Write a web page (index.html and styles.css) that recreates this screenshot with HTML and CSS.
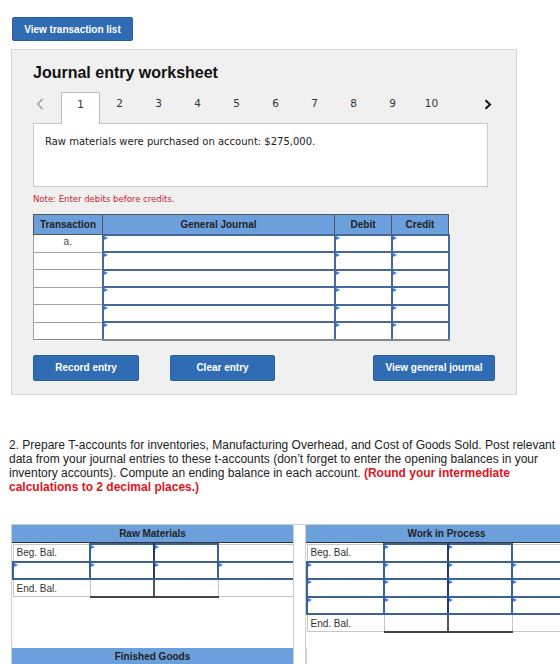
FILE: index.html
```html
<!DOCTYPE html>
<html lang="en">
<head>
<meta charset="UTF-8">
<meta name="viewport" content="width=device-width, initial-scale=1.0">
<title>Journal entry worksheet</title>
<link rel="stylesheet" href="styles.css">
</head>
<body>
<div class="page">
  <button class="btn btn-list">View transaction list</button>

  <section class="worksheet">
    <h2>Journal entry worksheet</h2>
    <div class="tabs">
      <span class="prev"><svg width="8" height="12" viewBox="0 0 8 12"><path d="M6.5 1 L1.8 6 L6.5 11" fill="none" stroke="#9b9b9b" stroke-width="1.5"/></svg></span>
      <span class="tab active">1</span>
      <span class="tab">2</span>
      <span class="tab">3</span>
      <span class="tab">4</span>
      <span class="tab">5</span>
      <span class="tab">6</span>
      <span class="tab">7</span>
      <span class="tab">8</span>
      <span class="tab">9</span>
      <span class="tab">10</span>
      <span class="next"><svg width="8" height="11" viewBox="0 0 8 11"><path d="M1.5 1.2 L6 5.5 L1.5 9.8" fill="none" stroke="#111" stroke-width="2"/></svg></span>
    </div>
    <div class="prompt">Raw materials were purchased on account: $275,000.</div>
    <p class="note">Note: Enter debits before credits.</p>

    <table class="journal">
      <thead>
        <tr>
          <th class="c-tr">Transaction</th>
          <th class="c-gj">General Journal</th>
          <th class="c-amt">Debit</th>
          <th class="c-amt">Credit</th>
        </tr>
      </thead>
      <tbody>
        <tr><td class="tr">a.</td><td class="in"></td><td class="in"></td><td class="in"></td></tr>
        <tr><td class="tr"></td><td class="in"></td><td class="in"></td><td class="in"></td></tr>
        <tr><td class="tr"></td><td class="in"></td><td class="in"></td><td class="in"></td></tr>
        <tr><td class="tr"></td><td class="in"></td><td class="in"></td><td class="in"></td></tr>
        <tr><td class="tr"></td><td class="in"></td><td class="in"></td><td class="in"></td></tr>
        <tr><td class="tr"></td><td class="in"></td><td class="in"></td><td class="in"></td></tr>
      </tbody>
    </table>

    <div class="actions">
      <button class="btn btn-record">Record entry</button>
      <button class="btn btn-clear">Clear entry</button>
      <button class="btn btn-journal">View general journal</button>
    </div>
  </section>

  <p class="question">2. Prepare T-accounts for inventories, Manufacturing Overhead, and Cost of Goods Sold. Post relevant data from your journal entries to these t-accounts (don’t forget to enter the opening balances in your inventory accounts). Compute an ending balance in each account. <b class="warn">(Round your intermediate calculations to 2 decimal places.)</b></p>

  <div class="taccounts">
    <div class="tacct">
      <div class="thead">Raw Materials</div>
      <div class="tbody">
        <table class="ledger">
          <tr><td class="label">Beg. Bal.</td><td class="in mid"></td><td class="in"></td><td></td></tr>
          <tr><td class="in"></td><td class="in mid"></td><td class="in"></td><td class="in"></td></tr>
          <tr><td class="label">End. Bal.</td><td class="total mid"></td><td class="total"></td><td></td></tr>
        </table>
      </div>
    </div>
    <div class="tgap"></div>
    <div class="tacct">
      <div class="thead">Work in Process</div>
      <div class="tbody">
        <table class="ledger">
          <tr><td class="label">Beg. Bal.</td><td class="in mid"></td><td class="in"></td><td></td></tr>
          <tr><td class="in"></td><td class="in mid"></td><td class="in"></td><td class="in"></td></tr>
          <tr><td class="in"></td><td class="in mid"></td><td class="in"></td><td class="in"></td></tr>
          <tr><td class="in"></td><td class="in mid"></td><td class="in"></td><td class="in"></td></tr>
          <tr><td class="label">End. Bal.</td><td class="total mid"></td><td class="total"></td><td></td></tr>
        </table>
      </div>
    </div>
    <div class="tacct">
      <div class="thead">Finished Goods</div>
      <div class="tbody"></div>
    </div>
    <div class="tgap"></div>
    <div class="tacct">
      <div class="thead">Manufacturing Overhead</div>
      <div class="tbody"></div>
    </div>
  </div>
</div>
</body>
</html>
```

FILE: styles.css
```css
* { box-sizing:border-box; }
html { overflow:hidden; }
body { margin:0; background:#fff; color:#222; font-family:"Liberation Sans", Arial, sans-serif; }
.page { padding:17px 0 40px 11px; }

/* buttons */
.btn { display:block; height:26px; padding:0; background:#306cb4; color:#fff; border:1px solid #2a609f; border-radius:2px; font:bold 10px "Liberation Sans", Arial, sans-serif; cursor:pointer; }
.btn-list { width:121px; height:24px; margin-left:1px; }

/* worksheet panel */
.worksheet { margin-top:8px; width:506px; height:346px; background:#f0f0f0; border:1px solid #d6d6d6; padding:0 21px; }
.worksheet h2 { margin:13px 0 0; font-size:16px; line-height:20px; color:#111; }

.tabs { display:flex; height:31px; margin-top:9px; font:10.5px "DejaVu Sans", Verdana, sans-serif; color:#333; }
.prev { width:28px; padding:6px 0 0 3px; }
.tab { width:39px; text-align:center; line-height:20px; padding-top:1px; }
.tab.active { position:relative; z-index:1; height:32px; background:#fff; border:1px solid #bdbdbd; border-bottom:none; }
.next { margin-left:33px; padding-top:7px; }

.prompt { width:455px; height:64px; background:#fff; border:1px solid #cacaca; padding:11px 0 0 11px; font:10px/14px "DejaVu Sans", Verdana, sans-serif; color:#222; }
.note { margin:6px 0 0; font:8.5px/12px "DejaVu Sans", Verdana, sans-serif; color:#c4262e; }

/* journal grid */
.journal { margin-top:9px; border-collapse:collapse; table-layout:fixed; width:415px; background:#fff; }
.journal th { height:20px; padding:0; background:#6ca0dd; border:1px solid #555; font:bold 10px "Liberation Sans", Arial, sans-serif; color:#222; }
.journal .c-tr { width:69px; }
.journal .c-gj { width:232px; }
.journal .c-amt { width:57px; }
.journal tr { height:17.5px; }
.journal td { padding:0; }
.journal td.tr { border:1px solid #a3a3a3; text-align:center; font-size:10px; color:#444; vertical-align:top; line-height:14px; }
.journal tbody tr:last-child td { border-bottom-color:#888; }

/* editable cell with the small blue flag */
td.in { position:relative; border:2px solid #46689c; background:#fff; }
td.in::before { content:""; position:absolute; left:0; top:0; border-left:4px solid #3a7fdc; border-top:2.5px solid transparent; border-bottom:2.5px solid transparent; }

.actions { display:flex; margin-top:14px; }
.btn-record { width:106px; }
.btn-clear { width:105px; margin-left:31px; }
.btn-journal { width:122px; margin-left:auto; }

/* question text */
.question { width:552px; margin:43px 0 0 -2px; font-size:12px; line-height:14px; color:#222; }
.warn { color:#e0141b; }

/* t-accounts */
.taccounts { display:grid; grid-template-columns:281px 13px 281px; width:575px; margin-top:30px; border-top:1px solid #cfcfcf; border-left:1px solid #cfcfcf; }
.tgap { grid-row:span 2; background:#fff; border-left:1px solid #cfcfcf; border-right:1px solid #cfcfcf; }
.thead { height:18px; background:#6ca0dd; border-bottom:1px solid #333; text-align:center; font:bold 10px/18px "Liberation Sans", Arial, sans-serif; color:#222; }
.tbody { height:105px; background:#fff; }
.ledger { border-collapse:collapse; table-layout:fixed; width:281px; }
.ledger tr { height:17.5px; }
.ledger td { padding:0; border:1px solid #c6c6c6; background:#fff; }
.ledger td:nth-child(1) { width:77px; }
.ledger td:nth-child(2), .ledger td:nth-child(3) { width:64px; }
.ledger td:nth-child(4) { width:76px; }
.ledger td.label { padding-left:3px; font-size:10px; color:#333; }
.ledger td.in { border:2px solid #3b6196; }
.ledger td.mid { border-right:2px solid #1f3c6a; }
.ledger td.total { border-bottom:2px solid #444; border-top-color:#bbb; }
.ledger td.total.mid { border-right:2px solid #555; }
```
